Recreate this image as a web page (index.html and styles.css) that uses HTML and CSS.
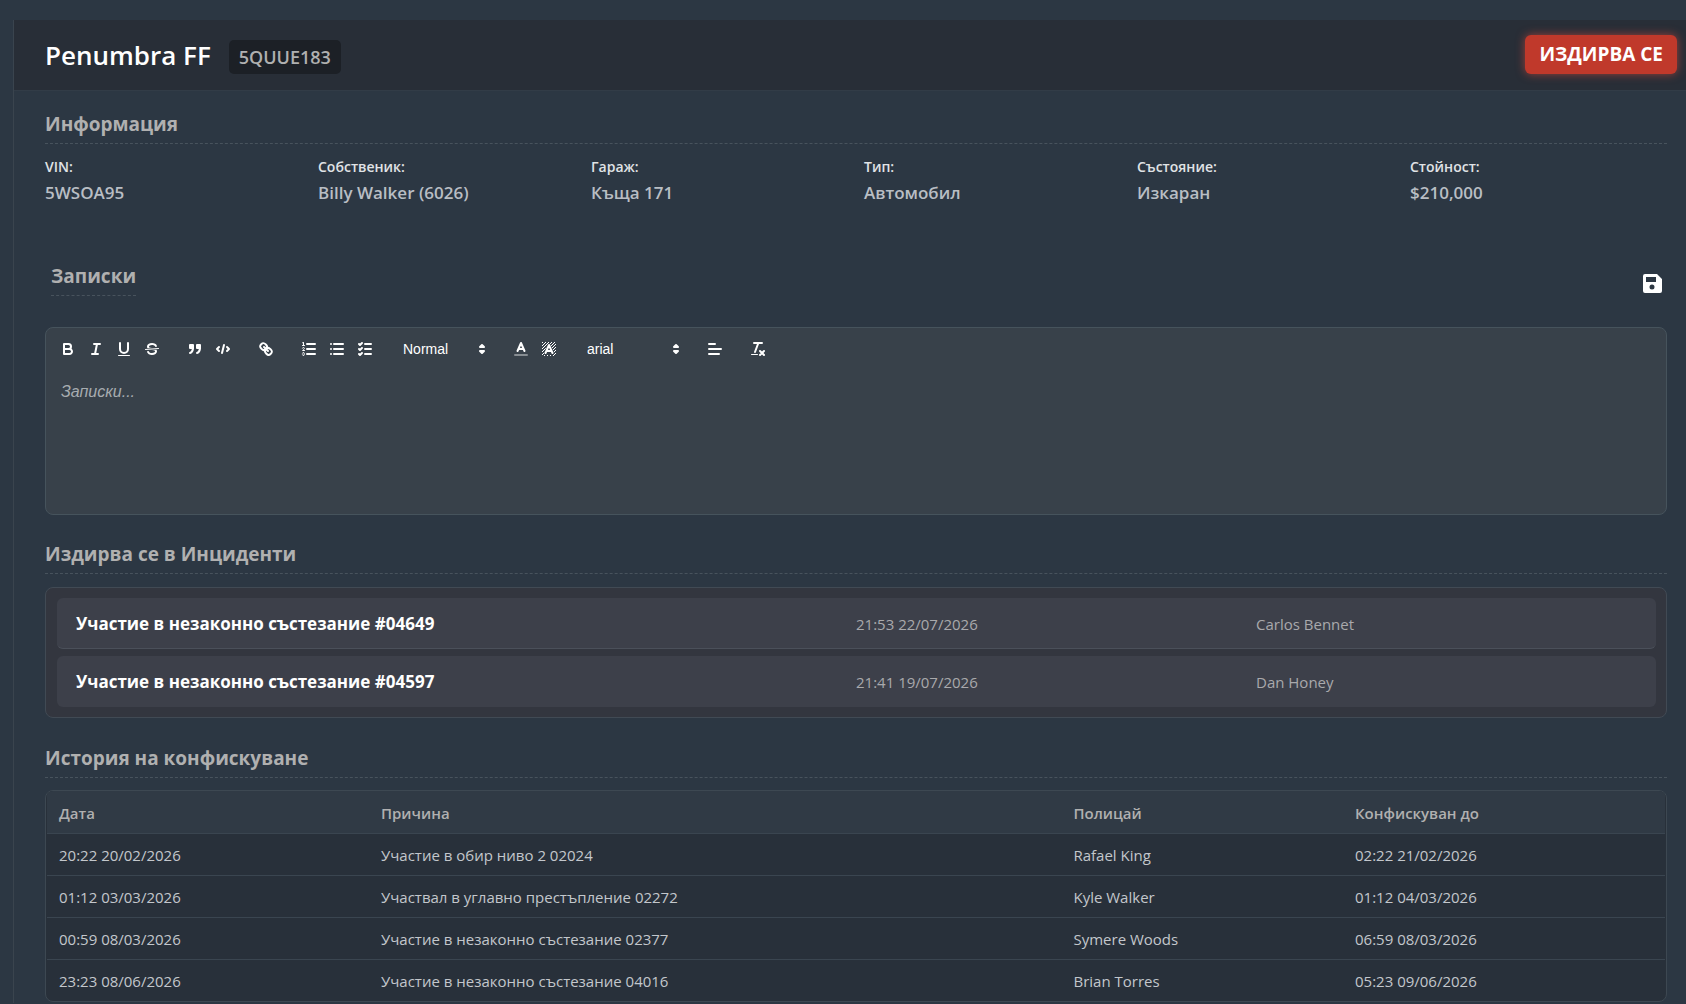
FILE: index.html
```html
<!DOCTYPE html>
<html lang="bg">
<head>
  <meta charset="UTF-8" />
  <title>Penumbra FF - 5QUUE183</title>
  <meta name="viewport" content="width=device-width, initial-scale=1.0"/>
  <link rel="stylesheet" href="styles.css">
</head>
<body>

  <main class="panel">
    <header class="panel-header">
      <h1>Penumbra FF</h1>
      <span class="plate">5QUUE183</span>
      <button type="button" class="wanted">ИЗДИРВА СЕ</button>
    </header>

    <div class="panel-body">
      <section class="info">
        <h2>Информация</h2>
        <dl class="info-grid">
          <div><dt>VIN:</dt><dd>5WSOA95</dd></div>
          <div><dt>Собственик:</dt><dd>Billy Walker (6026)</dd></div>
          <div><dt>Гараж:</dt><dd>Къща 171</dd></div>
          <div><dt>Тип:</dt><dd>Автомобил</dd></div>
          <div><dt>Състояние:</dt><dd>Изкаран</dd></div>
          <div><dt>Стойност:</dt><dd>$210,000</dd></div>
        </dl>
      </section>

      <section class="notes">
        <div class="notes-head">
          <h2><label for="notes">Записки</label></h2>
          <button type="button" class="save" aria-label="Запази">
            <svg viewBox="0 0 19 19"><path fill-rule="evenodd" d="M2 0h12l5 5v12a2 2 0 0 1-2 2H2a2 2 0 0 1-2-2V2a2 2 0 0 1 2-2zM3 3v5h10V3zM9 10.500a2.500 2.500 0 1 0 0 5a2.500 2.500 0 0 0 0-5z"/></svg>
          </button>
        </div>

        <div class="editor">
          <div class="toolbar">
            <div class="formats">
              <button type="button" aria-label="Bold"><svg viewBox="0 0 18 18"><path class="stroke" d="M5,4H9.5A2.5,2.5,0,0,1,12,6.5v0A2.5,2.5,0,0,1,9.5,9H5V4Z"/><path class="stroke" d="M5,9h5.5A2.5,2.5,0,0,1,13,11.5v0A2.5,2.5,0,0,1,10.5,14H5V9Z"/></svg></button>
              <button type="button" aria-label="Italic"><svg viewBox="0 0 18 18"><path class="stroke" d="M7,4H13M5,14H11M8,14L10,4"/></svg></button>
              <button type="button" aria-label="Underline"><svg viewBox="0 0 18 18"><path class="stroke" d="M5,3V9a4.012,4.012,0,0,0,4,4H9a4.012,4.012,0,0,0,4-4V3"/><rect class="fill" x="3" y="15" width="12" height="1" rx="0.5"/></svg></button>
              <button type="button" aria-label="Strike"><svg viewBox="0 0 18 18"><path class="stroke thin" d="M15.500,8.500L2.500,9.500"/><path class="fill" d="M9.007,8C6.542,7.791,6,7.519,6,6.500,6,5.792,7.283,5,9,5c1.571,0,2.765.679,2.969,1.309a1,1,0,0,0,1.900-.617C13.356,4.106,11.354,3,9,3,6.200,3,4,4.538,4,6.500a3.200,3.200,0,0,0,.5,1.843Z"/><path class="fill" d="M8.984,10C11.457,10.208,12,10.479,12,11.500c0,0.708-1.283,1.500-3,1.500-1.571,0-2.765-.679-2.969-1.309a1,1,0,1,0-1.900.617C4.644,13.894,6.646,15,9,15c2.800,0,5-1.538,5-3.500a3.200,3.200,0,0,0-.5-1.843Z"/></svg></button>
            </div>
            <div class="formats">
              <button type="button" aria-label="Quote"><svg viewBox="0 0 18 18"><path class="fill stroke" d="M4,5h3v3H4zM11,5h3v3h-3z"/><path class="fill stroke" d="M7,8c0,4.031-3,5-3,5M14,8c0,4.031-3,5-3,5"/></svg></button>
              <button type="button" aria-label="Code"><svg viewBox="0 0 18 18"><path class="stroke" d="M5,7L3,9L5,11M13,7L15,9L13,11M10,5L8,13"/></svg></button>
            </div>
            <div class="formats">
              <button type="button" aria-label="Link"><svg viewBox="0 0 18 18"><path class="stroke" d="M7,7L11,11M8.9,4.577a3.476,3.476,0,0,1,.36,4.679A3.476,3.476,0,0,1,4.577,8.9C3.185,7.5,2.035,6.4,4.217,4.217S7.5,3.185,8.9,4.577Z"/><path class="stroke" d="M13.423,9.1a3.476,3.476,0,0,0-4.679-.36,3.476,3.476,0,0,0,.36,4.679c1.392,1.392,2.5,2.542,4.679.36S14.815,10.5,13.423,9.1Z"/></svg></button>
            </div>
            <div class="formats">
              <button type="button" aria-label="Ordered list"><svg viewBox="0 0 18 18"><path class="stroke" d="M7,4H15M7,9H15M7,14H15"/><path class="stroke thin" d="M2.5,5.5H4.5M4.5,10.5h-2c0-.234,1.85-1.076,1.85-2.234A0.959,0.959,0,0,0,2.5,8.156M2.5,14.846a0.959,0.959,0,0,0,1.85-.109A0.7,0.7,0,0,0,3.75,14a0.688,0.688,0,0,0,.6-0.736,0.959,0.959,0,0,0-1.85-.109"/><path class="fill" d="M3.5,6A0.5,0.5,0,0,1,3,5.5V3.085l-0.276.138A0.5,0.5,0,0,1,2.053,3c-0.124-.247-0.023-0.324.224-0.447l1-.5A0.5,0.5,0,0,1,4,2.5v3A0.5,0.5,0,0,1,3.5,6Z"/></svg></button>
              <button type="button" aria-label="Bullet list"><svg viewBox="0 0 18 18"><path class="stroke" d="M6,4H15M6,9H15M6,14H15M3,4H3M3,9H3M3,14H3"/></svg></button>
              <button type="button" aria-label="Check list"><svg viewBox="0 0 18 18"><path class="stroke" d="M9,4H15M9,9H15M9,14H15M3,4L4,5L6,3M3,9L4,10L6,8M3,14L4,15L6,13"/></svg></button>
            </div>
            <div class="formats">
              <div class="picker picker-header">
                <select aria-label="Heading">
                  <option>Normal</option>
                  <option>Heading 1</option>
                  <option>Heading 2</option>
                </select>
                <svg viewBox="0 0 18 18"><path class="fill stroke" d="M7,11L9,13L11,11ZM7,7L9,5L11,7Z"/></svg>
              </div>
            </div>
            <div class="formats">
              <button type="button" aria-label="Text color"><svg viewBox="0 0 18 18"><path class="stroke faint" d="M3,15H15"/><path class="stroke" d="M5.5,11L9,3L12.5,11M11.63,9H6.38"/></svg></button>
              <button type="button" aria-label="Background color">
                <svg viewBox="0 0 18 18">
                  <defs><clipPath id="hatch"><path clip-rule="evenodd" d="M2,2H16V16H2ZM7.500,4L4,13V15H14V13L10.500,4Z"/></clipPath></defs>
                  <path class="stroke thin" clip-path="url(#hatch)" d="M1,4L4,1M1,7L7,1M1,10L10,1M1,13L13,1M1,16L16,1M2,18L18,2M5,18L18,5M8,18L18,8M11,18L18,11M14,18L18,14"/>
                  <path class="stroke" d="M5.500,13L9,5L12.500,13M11.630,11H6.380"/>
                </svg>
              </button>
            </div>
            <div class="formats">
              <div class="picker picker-font">
                <select aria-label="Font">
                  <option>arial</option>
                  <option>serif</option>
                  <option>monospace</option>
                </select>
                <svg viewBox="0 0 18 18"><path class="fill stroke" d="M7,11L9,13L11,11ZM7,7L9,5L11,7Z"/></svg>
              </div>
            </div>
            <div class="formats">
              <button type="button" aria-label="Align"><svg viewBox="0 0 18 18"><path class="stroke" d="M3,4H9M3,9H15M3,14H13"/></svg></button>
            </div>
            <div class="formats">
              <button type="button" aria-label="Clear formatting"><svg viewBox="0 0 18 18"><path class="stroke" d="M5,3H13M6,12L9.35,3M11,11L15,15M15,11L11,15"/><rect class="fill" x="2" y="14" width="7" height="1" rx="0.5"/></svg></button>
            </div>
          </div>
          <textarea id="notes" placeholder="Записки..."></textarea>
        </div>
      </section>

      <section class="incidents">
        <h2>Издирва се в Инциденти</h2>
        <ul class="incident-list">
          <li>
            <a href="#04649">Участие в незаконно състезание #04649</a>
            <span>21:53 22/07/2026</span>
            <span>Carlos Bennet</span>
          </li>
          <li>
            <a href="#04597">Участие в незаконно състезание #04597</a>
            <span>21:41 19/07/2026</span>
            <span>Dan Honey</span>
          </li>
        </ul>
      </section>

      <section class="history">
        <h2>История на конфискуване</h2>
        <div class="table-wrap">
          <table>
            <thead>
              <tr>
                <th class="col-date">Дата</th>
                <th class="col-reason">Причина</th>
                <th class="col-officer">Полицай</th>
                <th>Конфискуван до</th>
              </tr>
            </thead>
            <tbody>
              <tr><td>20:22 20/02/2026</td><td>Участие в обир ниво 2 02024</td><td>Rafael King</td><td>02:22 21/02/2026</td></tr>
              <tr><td>01:12 03/03/2026</td><td>Участвал в углавно престъпление 02272</td><td>Kyle Walker</td><td>01:12 04/03/2026</td></tr>
              <tr><td>00:59 08/03/2026</td><td>Участие в незаконно състезание 02377</td><td>Symere Woods</td><td>06:59 08/03/2026</td></tr>
              <tr><td>23:23 08/06/2026</td><td>Участие в незаконно състезание 04016</td><td>Brian Torres</td><td>05:23 09/06/2026</td></tr>
            </tbody>
          </table>
        </div>
      </section>
    </div>
  </main>

</body>
</html>
```
FILE: styles.css
```css
* {
  box-sizing: border-box;
}

body {
  margin: 0;
  padding: 20px 0 0 13px;
  font-family: "Segoe UI", "Open Sans", "Noto Sans", sans-serif;
  font-size: 15px;
  line-height: 20px;
  color: #c3c7cc;
  background: #2c3743;
}

h1, h2, dl, dd, ul {
  margin: 0;
  padding: 0;
}

button {
  font-family: inherit;
  border: none;
  cursor: pointer;
}

.panel {
  border-left: 1px solid #3a444e;
}

.panel-header {
  display: flex;
  align-items: center;
  height: 71px;
  padding: 0 9px 0 31px;
  background: #282e37;
  border-bottom: 1px solid #323c47;
}

h1 {
  font-size: 26px;
  line-height: 36px;
  font-weight: 600;
  color: #fff;
}

.plate {
  margin: 4px 0 0 18px;
  padding: 5px 10px;
  font-size: 18px;
  line-height: 24px;
  font-weight: 600;
  color: #b0b0b0;
  background: #1c2026;
  border-radius: 5px;
}

.wanted {
  margin: 0 0 1px auto;
  padding: 7px 14px;
  font-size: 19px;
  line-height: 25px;
  font-weight: 700;
  color: #fff;
  background: #c0392b;
  border-radius: 6px;
  box-shadow: 0 0 10px rgba(231, 76, 60, 0.6);
}

.panel-body {
  padding: 20px 19px 1px 31px;
}

h2 {
  padding-bottom: 6px;
  font-size: 19px;
  line-height: 26px;
  font-weight: 700;
  color: #b0b0b0;
  border-bottom: 1px dashed #48535d;
}

/* vehicle info */
.info-grid {
  display: grid;
  grid-template-columns: repeat(6, 1fr);
  gap: 16px;
  padding-top: 11px;
}

dt {
  font-size: 14px;
  line-height: 24px;
  font-weight: 600;
  color: #e0e3e6;
}

dd {
  font-size: 17px;
  line-height: 28px;
  font-weight: 600;
  color: #b9bec4;
}

/* notes editor */
.notes {
  padding-top: 56px;
}

.notes-head {
  display: flex;
  align-items: center;
  justify-content: space-between;
  padding: 0 5px 23px 6px;
}

.notes-head h2 {
  margin-bottom: 8px;
}

.save {
  width: 19px;
  height: 19px;
  padding: 0;
  background: none;
}

.save svg {
  display: block;
  fill: #fff;
}

.editor {
  background: #38414a;
  border: 1px solid #46535c;
  border-radius: 8px;
}

.toolbar {
  display: flex;
  gap: 15px;
  padding: 9px 8px 8px;
}

.formats {
  display: flex;
}

.toolbar button {
  width: 28px;
  height: 24px;
  padding: 3px 5px;
  background: none;
}

.toolbar svg {
  display: block;
  width: 18px;
  height: 18px;
}

.stroke {
  fill: none;
  stroke: #fff;
  stroke-width: 2;
  stroke-linecap: round;
  stroke-linejoin: round;
}

.fill {
  fill: #fff;
}

.thin {
  stroke-width: 1;
}

.faint {
  opacity: 0.4;
}

.picker {
  display: grid;
  align-items: center;
  justify-items: end;
  padding: 0 1px;
}

.picker select,
.picker svg {
  grid-area: 1 / 1;
}

.picker svg {
  pointer-events: none;
}

.picker-header {
  width: 98px;
}

.picker-font {
  width: 108px;
}

.picker select {
  width: 100%;
  height: 24px;
  padding: 0 18px 0 8px;
  font: 500 14px "Liberation Sans", Arial, sans-serif;
  color: #fff;
  background: none;
  border: none;
  appearance: none;
}

textarea {
  display: block;
  width: 100%;
  height: 145px;
  padding: 12px 15px;
  font: 16px/22px "Liberation Sans", Arial, sans-serif;
  color: #fff;
  background: none;
  border: none;
  outline: none;
  resize: none;
}

textarea::placeholder {
  color: #a7acb0;
  font-style: italic;
  opacity: 1;
}

/* incidents */
.incidents {
  padding-top: 26px;
}

.incident-list {
  display: flex;
  flex-direction: column;
  gap: 7px;
  margin-top: 13px;
  padding: 10px 10px 10px 11px;
  list-style: none;
  background: #33363f;
  border: 1px solid #414a54;
  border-radius: 8px;
}

.incident-list li {
  display: grid;
  grid-template-columns: 2fr 1fr 1fr;
  gap: 20px;
  align-items: center;
  padding: 13px 20px 12px 19px;
  color: #a9a9ac;
  background: #3d404a;
  border-bottom: 1px solid #4b505a;
  border-radius: 6px;
}

.incident-list li:last-child {
  border-bottom-color: transparent;
}

.incident-list a {
  font-size: 17px;
  line-height: 25px;
  font-weight: 700;
  color: #fff;
  text-decoration: none;
}

/* impound history */
.history {
  padding-top: 27px;
}

.table-wrap {
  margin-top: 12px;
  padding: 0 1px;
  overflow: hidden;
  background: #28303a;
  border: 1px solid #3d4852;
  border-radius: 8px;
}

table {
  width: 100%;
  border-spacing: 0;
}

th, td {
  height: 42px;
  padding: 0 12px;
  text-align: left;
  border-bottom: 1px solid #3a4550;
}

th {
  height: 43px;
  padding-top: 2px;
  font-weight: 600;
  color: #b0b0b0;
  background: #303a45;
}

tbody tr:last-child td {
  height: 41px;
  border-bottom: none;
}

.col-date {
  width: 19.9%;
}

.col-reason {
  width: 42.8%;
}

.col-officer {
  width: 17.4%;
}
```
